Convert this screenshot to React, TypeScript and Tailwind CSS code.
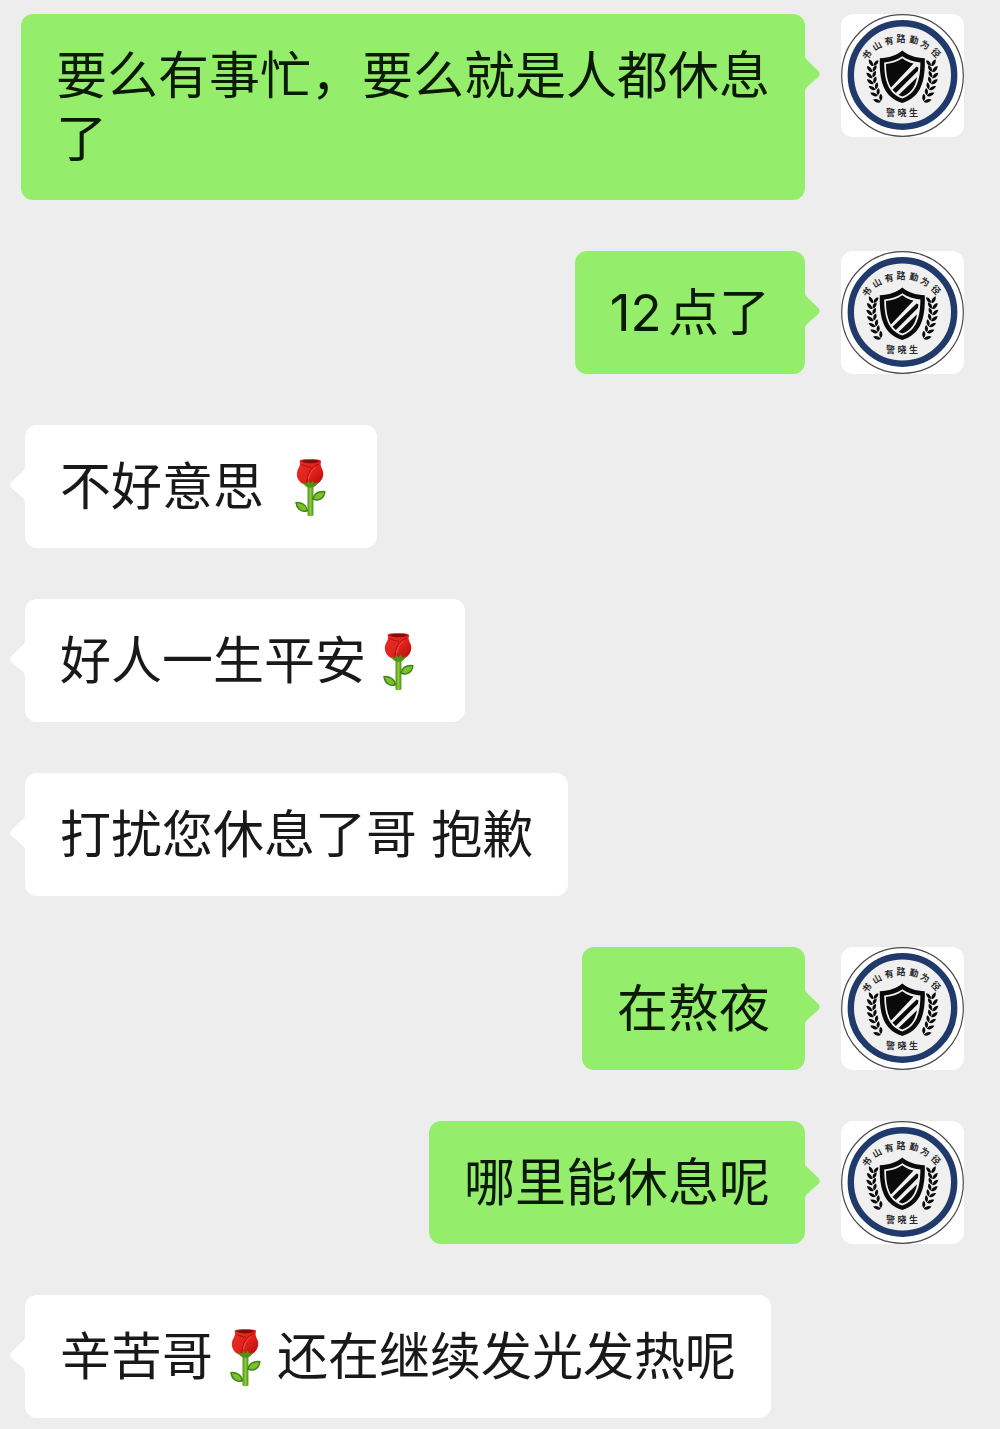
type Message = {
  id: number;
  from: "me" | "them";
  text: string;
};

const MESSAGES: Message[] = [
  { id: 1, from: "me", text: "要么有事忙，要么就是人都休息了" },
  { id: 2, from: "me", text: "12点了" },
  { id: 3, from: "them", text: "不好意思 🌹" },
  { id: 4, from: "them", text: "好人一生平安🌹" },
  { id: 5, from: "them", text: "打扰您休息了哥 抱歉" },
  { id: 6, from: "me", text: "在熬夜" },
  { id: 7, from: "me", text: "哪里能休息呢" },
  { id: 8, from: "them", text: "辛苦哥🌹还在继续发光发热呢" },
];

// Characters set around the top of the badge
const MOTTO = [
  { char: "书", x: 26, y: 41, angle: -52 },
  { char: "山", x: 36, y: 32, angle: -30 },
  { char: "有", x: 48, y: 27, angle: -10 },
  { char: "路", x: 60, y: 25, angle: 0 },
  { char: "勤", x: 73, y: 26, angle: 10 },
  { char: "为", x: 84, y: 31, angle: 30 },
  { char: "径", x: 95, y: 39, angle: 48 },
];

const LEAVES = [
  { x: 32, y: 51, angle: 14 },
  { x: 31, y: 57, angle: 4 },
  { x: 31, y: 63, angle: -4 },
  { x: 32, y: 69, angle: -10 },
  { x: 34, y: 75, angle: -16 },
  { x: 36, y: 81, angle: -22 },
  { x: 39, y: 87, angle: -28 },
];

function Laurel() {
  return (
    <g>
      {LEAVES.map((leaf) => (
        <g
          key={leaf.y}
          transform={`translate(${leaf.x} ${leaf.y}) rotate(${leaf.angle})`}
        >
          <path d="M0.4 1C-1.6 1.6 -4.8 0 -5.4 -4.6C-2.6 -4.4 0 -2.4 0.4 1Z" />
          <path d="M0.6 0.6C0 -2.4 1 -5 4 -6C5 -3.4 3.6 -0.4 0.6 0.6Z" />
        </g>
      ))}
    </g>
  );
}

function Avatar() {
  return (
    <svg
      viewBox="0 0 123 123"
      role="img"
      aria-label="书山有路勤为径 警晓生"
      className="h-[123px] w-[123px] shrink-0 rounded-xl bg-white"
    >
      <circle cx="61.5" cy="61.5" r="60.8" fill="#fff" stroke="#4a4a4a" strokeWidth="1.2" />
      <circle cx="61.5" cy="61" r="51.7" fill="#f0f0f1" stroke="#1f3a6b" strokeWidth="6.4" />
      <g
        fill="#2a2a2a"
        fontSize="9"
        fontWeight="700"
        textAnchor="middle"
        className="font-['Noto_Sans_CJK_SC',sans-serif]"
      >
        {MOTTO.map((m) => (
          <text key={m.char} transform={`translate(${m.x} ${m.y}) rotate(${m.angle})`} y="3.3">
            {m.char}
          </text>
        ))}
        <text x="49.5" y="102">警</text>
        <text x="61" y="102">晓</text>
        <text x="72.5" y="102">生</text>
      </g>
      <g fill="#0a0a0a">
        <Laurel />
        <g transform="translate(122.6 0) scale(-1 1)">
          <Laurel />
        </g>
        <path d="M61.3 36.6C55.5 41.5 48 44 38.8 44.2C38.2 66 42 83 61.3 89C80.6 83 84.4 66 83.8 44.2C74.6 44 67.1 41.5 61.3 36.6Z" />
      </g>
      <path
        d="M61.3 42.2C56 46 50 47.8 43.2 48.4C43.3 66 47 79.5 61.3 84.4C75.6 79.5 79.3 66 79.4 48.4C72.6 47.8 66.6 46 61.3 42.2Z"
        fill="#f0f0f1"
      />
      <path
        d="M61.3 44.2C56.5 47.6 51 49.4 45 50C45 59 46.3 67.5 50 73.6L72.6 49.6C68.2 48.6 64.6 46.8 61.3 44.2Z"
        fill="#0a0a0a"
      />
      <path
        d="M51.5 75.8L75.6 52.6L77.4 53.4L77 56.8L54.8 78.9ZM57.6 81L76 63.2C74.4 72.6 70 79.4 61.3 82.6Z"
        fill="#0a0a0a"
      />
    </svg>
  );
}

function Rose() {
  return (
    <svg
      viewBox="0 0 64 63"
      role="img"
      aria-label="玫瑰"
      className="inline-block h-[63px] w-[64px] align-top"
    >
      <defs>
        <linearGradient id="petal" x1="0" y1="0" x2="1" y2="1">
          <stop offset="0" stopColor="#e8322a" />
          <stop offset="0.55" stopColor="#e3201b" />
          <stop offset="1" stopColor="#a80f0c" />
        </linearGradient>
        <linearGradient id="stem" x1="0" y1="0" x2="1" y2="0">
          <stop offset="0" stopColor="#4f9416" />
          <stop offset="0.5" stopColor="#8ccb3a" />
          <stop offset="1" stopColor="#4a8f14" />
        </linearGradient>
      </defs>
      <path d="M29.5 29H35.4V60.5Q32 61.8 29.5 60.5Z" fill="url(#stem)" />
      <path
        d="M35 44C36 38.5 41 36.2 46.8 36.6C46.6 42.5 41.5 47 35 44Z"
        fill="#7cc02c"
        stroke="#3f8412"
        strokeWidth="1.4"
      />
      <path
        d="M29.5 55.5C28.5 50 23.6 47 18 47.6C18.6 53.4 23.5 58.4 29.5 55.5Z"
        fill="#7cc02c"
        stroke="#3f8412"
        strokeWidth="1.4"
      />
      <path
        d="M21.6 6.5C21 4.8 24 4.2 32 4.2C40 4.2 43.8 4.8 43 6.8C42 9.6 43 12 44.8 15.6C47 22.8 41.6 30.6 32.4 31C22 30.6 17 23 19.4 15.6C21.2 12 22.8 9.4 21.6 6.5Z"
        fill="url(#petal)"
      />
      <path d="M22.8 5.9C27 4.2 38 4.2 41.8 5.9C39 9 26 9 22.8 5.9Z" fill="#7d0f0c" />
      <path
        d="M41 9C34 11 29.4 17.5 28.6 29M23.4 9.4C26.4 11 30 11.6 33 12.6"
        fill="none"
        stroke="#a5120f"
        strokeWidth="1"
      />
      <path d="M37.5 12C33.4 15 31 19.4 30.4 24.4" fill="none" stroke="#ef5a4b" strokeWidth="1" />
      <path
        d="M25 27.6L29 28.6L30.2 25.6L32.4 28.4L34.8 25.6L36 28.6L40 27.6C38.4 31.4 35.6 32.8 32.4 32.8C29.2 32.8 26.6 31.4 25 27.6Z"
        fill="#4f9416"
      />
    </svg>
  );
}

function Tail({ side }: { side: "left" | "right" }) {
  return (
    <svg
      viewBox="0 0 15 34"
      aria-hidden="true"
      className={
        side === "right"
          ? "mt-[43px] h-[34px] w-[15px] shrink-0 text-[#95ee6b]"
          : "mt-[43px] h-[34px] w-[15px] shrink-0 -scale-x-100 text-white"
      }
    >
      <path d="M0 0Q0.4 1.6 2 3L13.6 14.2Q16 17 13.6 19.8L2 30Q0.4 31.6 0 34Z" fill="currentColor" />
    </svg>
  );
}

// The rose emoji is drawn, everything else stays as text
function MessageText({ text }: { text: string }) {
  const parts = text.split("🌹");
  return (
    <>
      {parts.map((part, i) => (
        <span key={i}>
          {i > 0 && <Rose />}
          {part}
        </span>
      ))}
    </>
  );
}

function MessageRow({ message }: { message: Message }) {
  if (message.from === "me") {
    return (
      <li className="flex items-start justify-end pr-9 pl-5">
        <p className="max-w-[784px] rounded-xl bg-[#95ee6b] px-[35px] py-[30px] text-[#0b1a05]">
          <MessageText text={message.text} />
        </p>
        <Tail side="right" />
        <div className="ml-[21px] shrink-0">
          <Avatar />
        </div>
      </li>
    );
  }
  return (
    <li className="flex items-start pr-9 pl-[10px]">
      <Tail side="left" />
      <p className="max-w-[784px] rounded-xl bg-white px-[35px] py-[30px] text-[#191919]">
        <MessageText text={message.text} />
      </p>
    </li>
  );
}

export default function App() {
  return (
    <main
      lang="zh-CN"
      className="min-h-screen bg-[#ededed] pt-[14px] pb-[11px] font-['Inter','Noto_Sans_CJK_SC',sans-serif] text-[51px] leading-[63px] [text-autospace:normal]"
    >
      <ul className="flex flex-col gap-[51px]">
        {MESSAGES.map((message) => (
          <MessageRow key={message.id} message={message} />
        ))}
      </ul>
    </main>
  );
}
